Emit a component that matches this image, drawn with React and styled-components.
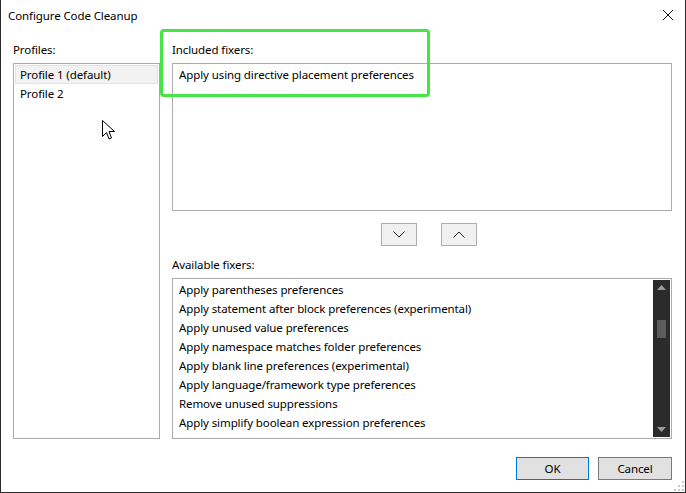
import React from "react";
import styled, { createGlobalStyle } from "styled-components";

const Global = createGlobalStyle`
  html, body { margin: 0; padding: 0; background: #fff; }
  body { font-family: "Segoe UI", "Noto Sans", sans-serif; font-size: 11.5px; letter-spacing: -0.1px; color: #000; }
  * { box-sizing: border-box; }
`;

const Window = styled.div`
  position: relative;
  width: 686px;
  height: 493px;
  background: #fff;
  border-left: 1px solid #2b2b2b;
  border-right: 1px solid #2b2b2b;
  border-bottom: 1px solid #2b2b2b;
  display: flex;
  flex-direction: column;
  overflow: hidden;
`;

const TitleBar = styled.div`
  flex-shrink: 0;
  height: 31px;
  display: flex;
  align-items: center;
  justify-content: space-between;
  padding: 0 11px 0 7px;
`;

const Title = styled.div`
  line-height: 16px;
`;

const CloseBtn = styled.div`
  width: 12px;
  height: 12px;
  display: flex;
  margin-top: -2px;
`;

const Body = styled.div`
  flex-shrink: 0;
  height: 408px;
  display: grid;
  grid-template-columns: 147px 500px;
  column-gap: 12px;
  padding: 12px 13px 0 12px;
`;

const Column = styled.div`
  display: flex;
  flex-direction: column;
`;

const Label = styled.div`
  flex-shrink: 0;
  height: 20px;
  line-height: 14px;
`;

const ListBox = styled.div`
  flex-shrink: 0;
  border: 1px solid #ababab;
  background: #fff;
  height: ${(p) => p.$h}px;
  padding: 1px;
  position: relative;
  display: flex;
`;

const Items = styled.div`
  flex: 1;
  display: flex;
  flex-direction: column;
`;

const Item = styled.div`
  height: 19px;
  line-height: 18px;
  padding-left: ${(p) => (p.$profile ? 4 : 4)}px;
  white-space: nowrap;
  background: ${(p) => (p.$selected ? "#f2f2f2" : "transparent")};
  border: 1px solid ${(p) => (p.$selected ? "#e3e3e3" : "transparent")};
`;

const MoveRow = styled.div`
  flex-shrink: 0;
  height: 47px;
  display: flex;
  justify-content: center;
  gap: 24px;
  padding-top: 12px;
  padding-left: 14px;
`;

const SmallBtn = styled.div`
  width: 36px;
  height: 23px;
  background: #f0f0f0;
  border: 1px solid #adadad;
  display: flex;
  align-items: center;
  justify-content: center;
`;

const ScrollBar = styled.div`
  width: 17px;
  background: #2b2b2b;
  display: flex;
  flex-direction: column;
  align-items: center;
  justify-content: space-between;
  padding: 5px 0;
  position: relative;
`;

const Thumb = styled.div`
  position: absolute;
  top: 40px;
  left: 4px;
  width: 9px;
  height: 18px;
  background: #5c5c5c;
`;

const Footer = styled.div`
  flex-shrink: 0;
  height: 53px;
  display: flex;
  justify-content: flex-end;
  gap: 9px;
  padding: 18px 13px 0 0;
`;

const DialogButton = styled.div`
  width: ${(p) => p.$w}px;
  height: 23px;
  background: #e1e1e1;
  border: 1px solid ${(p) => (p.$default ? "#0078d7" : "#7a7a7a")};
  display: flex;
  align-items: center;
  justify-content: center;
  line-height: 16px;
`;

const Highlight = styled.div`
  position: absolute;
  left: 159px;
  top: 29px;
  width: 270px;
  height: 68px;
  border: 3px solid #46e446;
  border-radius: 4px;
  box-shadow: 0 0 1px rgba(0, 0, 0, 0.25);
  pointer-events: none;
`;

const Cursor = styled.svg`
  position: absolute;
  left: 101px;
  top: 120px;
`;

const Grip = styled.svg`
  position: absolute;
  right: 1px;
  bottom: 1px;
`;

const available = [
  "Apply parentheses preferences",
  "Apply statement after block preferences (experimental)",
  "Apply unused value preferences",
  "Apply namespace matches folder preferences",
  "Apply blank line preferences (experimental)",
  "Apply language/framework type preferences",
  "Remove unused suppressions",
  "Apply simplify boolean expression preferences",
];

export default function App() {
  return (
    <>
      <Global />
      <Window>
        <TitleBar>
          <Title>Configure Code Cleanup</Title>
          <CloseBtn>
            <svg width="12" height="12" viewBox="0 0 12 12">
              <path d="M1 1 L11 11 M11 1 L1 11" stroke="#111" strokeWidth="1" fill="none" />
            </svg>
          </CloseBtn>
        </TitleBar>
        <Body>
          <Column>
            <Label>Profiles:</Label>
            <ListBox $h={376}>
              <Items>
                <Item $profile $selected>Profile 1 (default)</Item>
                <Item $profile>Profile 2</Item>
              </Items>
            </ListBox>
          </Column>
          <Column>
            <Label>Included fixers:</Label>
            <ListBox $h={148}>
              <Items>
                <Item>Apply using directive placement preferences</Item>
              </Items>
            </ListBox>
            <MoveRow>
              <SmallBtn>
                <svg width="12" height="7" viewBox="0 0 12 7">
                  <path d="M0.5 0.5 L6 6 L11.5 0.5" stroke="#222" strokeWidth="1" fill="none" />
                </svg>
              </SmallBtn>
              <SmallBtn>
                <svg width="12" height="7" viewBox="0 0 12 7">
                  <path d="M0.5 6.5 L6 1 L11.5 6.5" stroke="#222" strokeWidth="1" fill="none" />
                </svg>
              </SmallBtn>
            </MoveRow>
            <Label>Available fixers:</Label>
            <ListBox $h={161}>
              <Items>
                {available.map((t) => (
                  <Item key={t}>{t}</Item>
                ))}
              </Items>
              <ScrollBar>
                <svg width="9" height="5" viewBox="0 0 9 5">
                  <path d="M0 5 L4.5 0 L9 5 Z" fill="#9a9a9a" />
                </svg>
                <Thumb />
                <svg width="9" height="5" viewBox="0 0 9 5">
                  <path d="M0 0 L4.5 5 L9 0 Z" fill="#9a9a9a" />
                </svg>
              </ScrollBar>
            </ListBox>
          </Column>
        </Body>
        <Footer>
          <DialogButton $w={73} $default>OK</DialogButton>
          <DialogButton $w={74}>Cancel</DialogButton>
        </Footer>
        <Highlight />
        <Cursor width="14" height="22" viewBox="0 0 14 22">
          <path d="M0.5 0.5 L0.5 16.5 L4.5 12.5 L7 19 L9.5 18 L7 11.5 L12.5 11.5 Z" fill="#fff" stroke="#000" strokeWidth="1" strokeLinejoin="miter" />
        </Cursor>
        <Grip width="12" height="12" viewBox="0 0 12 12">
          {[[10, 2], [10, 6], [6, 6], [10, 10], [6, 10], [2, 10]].map(([x, y]) => (
            <rect key={`${x}-${y}`} x={x} y={y} width="2" height="2" fill="#c8c8c8" />
          ))}
        </Grip>
      </Window>
    </>
  );
}
